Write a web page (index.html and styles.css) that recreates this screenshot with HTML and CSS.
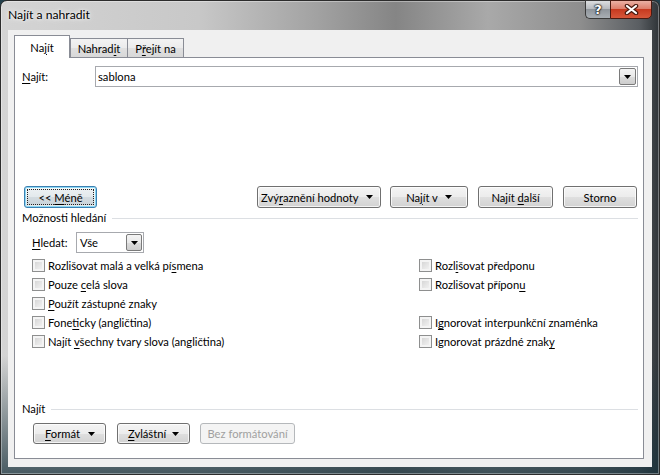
FILE: index.html
```html
<!DOCTYPE html>
<html lang="cs">
<head>
<meta charset="utf-8">
<title>Najít a nahradit</title>
<link rel="stylesheet" href="styles.css">
</head>
<body>
<div class="window">
  <div class="titlebar">
    <span class="title">Najít a nahradit</span>
    <div class="caption-btns">
      <div class="cap help">?</div>
      <div class="cap close">
        <svg width="15" height="11" viewBox="0 0 15 11"><path d="M3 2 L12 9 M12 2 L3 9" stroke="#4a1a10" stroke-width="4.5" stroke-linecap="round"/><path d="M3 2 L12 9 M12 2 L3 9" stroke="#fff" stroke-width="2.2" stroke-linecap="round"/></svg>
      </div>
    </div>
  </div>
  <div class="client">
    <div class="tabs">
      <div class="tab active"><span>Na<u>j</u>ít</span></div>
      <div class="tab t2"><span>Nahrad<u>i</u>t</span></div>
      <div class="tab t3"><span>P<u>ř</u>ejít na</span></div>
    </div>
    <div class="panel">
      <div class="find-row">
        <span class="find-label"><u>N</u>ajít:</span>
        <div class="combo">
          <span class="combo-text">sablona</span>
          <span class="dd-btn"><svg width="7" height="4" viewBox="0 0 7 4"><path d="M0 0h7L3.5 4z"/></svg></span>
        </div>
      </div>

      <div class="btn-row">
        <div class="btn focused less"><span class="focus-rect"><span>&lt;&lt; <u>M</u>éně</span></span></div>
        <div class="btn-group">
          <div class="btn menu zvyr"><span>Zvý<u>r</u>aznění hodnoty</span><svg width="7" height="4" viewBox="0 0 7 4"><path d="M0 0h7L3.5 4z"/></svg></div>
          <div class="btn menu najitv"><span>Na<u>j</u>ít v</span><svg width="7" height="4" viewBox="0 0 7 4"><path d="M0 0h7L3.5 4z"/></svg></div>
          <div class="btn dalsi"><span>Najít <u>d</u>alší</span></div>
          <div class="btn storno"><span>Storno</span></div>
        </div>
      </div>

      <div class="group-head"><span>Možnosti hledání</span><div class="rule"></div></div>

      <div class="search-row">
        <span class="search-label"><u>H</u>ledat:</span>
        <div class="select">
          <span class="select-text">Vše</span>
          <span class="dd-btn"><svg width="7" height="4" viewBox="0 0 7 4"><path d="M0 0h7L3.5 4z"/></svg></span>
        </div>
      </div>

      <div class="options">
        <div class="check"><span class="cb"></span><span>Rozlišovat malá a velká pí<u>s</u>mena</span></div>
        <div class="check"><span class="cb"></span><span>Rozl<u>i</u>šovat předponu</span></div>
        <div class="check"><span class="cb"></span><span>Pouze <u>c</u>elá slova</span></div>
        <div class="check"><span class="cb"></span><span>Rozlišovat přípon<u>u</u></span></div>
        <div class="check"><span class="cb"></span><span><u>P</u>oužít zástupné znaky</span></div>
        <div class="check empty"></div>
        <div class="check"><span class="cb"></span><span>Fone<u>t</u>icky (angličtina)</span></div>
        <div class="check"><span class="cb"></span><span>I<u>g</u>norovat interpunkční znaménka</span></div>
        <div class="check"><span class="cb"></span><span>Najít <u>v</u>šechny tvary slova (angličtina)</span></div>
        <div class="check"><span class="cb"></span><span>Ignorovat prázdné znak<u>y</u></span></div>
      </div>

      <div class="group-head lower"><span>Najít</span><div class="rule"></div></div>

      <div class="btn-row bottom">
        <div class="btn menu fmt"><span><u>F</u>ormát</span><svg width="7" height="4" viewBox="0 0 7 4"><path d="M0 0h7L3.5 4z"/></svg></div>
        <div class="btn menu zvl"><span><u>Z</u>vláštní</span><svg width="7" height="4" viewBox="0 0 7 4"><path d="M0 0h7L3.5 4z"/></svg></div>
        <div class="btn disabled bez"><span>Bez formátování</span></div>
      </div>
    </div>
  </div>
</div>
</body>
</html>
```

FILE: styles.css
```css
* { box-sizing: border-box; }
html, body { margin: 0; padding: 0; }
body {
  width: 660px;
  height: 475px;
  overflow: hidden;
  font-family: "Lato", "Noto Sans", sans-serif;
  font-size: 11.2px;
  color: #000;
  background: #23404c;
}
u { text-decoration: underline; text-underline-offset: 2px; }

.window {
  width: 660px;
  height: 475px;
  border: 1px solid #2c2c2c;
  border-radius: 7px 7px 0 0;
  padding: 0 7px 7px;
  display: flex;
  flex-direction: column;
  background:
    linear-gradient(to bottom, rgba(0,0,0,0) 0%, rgba(0,0,0,0) 75%, rgba(25,50,60,0.75) 100%),
    linear-gradient(to right, #d4d4d4 0%, #c8c8c8 30%, #a2a2a2 48%, #858585 60%, #a9a9a9 74%, #8e8e8e 88%, #5a5e62 97%, #2f3438 100%);
  box-shadow: inset 0 0 0 1px rgba(255,255,255,0.35);
}

.titlebar {
  height: 29px;
  display: flex;
  align-items: flex-start;
}
.title {
  margin-top: 6px;
  font-size: 12.2px;
  text-shadow: 0 0 6px rgba(255,255,255,0.9), 0 0 3px rgba(255,255,255,0.9);
}
.caption-btns {
  margin-left: auto;
  margin-top: -1px;
  display: flex;
  height: 19px;
}
.cap {
  height: 19px;
  display: flex;
  align-items: center;
  justify-content: center;
}
.help {
  width: 25px;
  border: 1px solid #3a3a3a;
  border-right: none;
  border-radius: 0 0 0 5px;
  background: linear-gradient(to bottom, #dcdee0 0%, #b7bbbf 45%, #8f959b 50%, #a9afb4 100%);
  color: #fff;
  font-family: "DejaVu Sans", sans-serif;
  font-weight: bold;
  font-size: 13px;
  text-shadow: 0 0 1px #000, 0 0 2px #000, 0 0 2px #000;
}
.close {
  width: 42px;
  border: 1px solid #4a1b12;
  border-radius: 0 0 5px 0;
  background: linear-gradient(to bottom, #eab0a4 0%, #dd7f6c 45%, #c73a20 50%, #d6573a 100%);
}

.client {
  flex: 1;
  background: #f0f0f0;
  padding: 5px 8px 8px 6px;
  display: flex;
  flex-direction: column;
}

.tabs {
  display: flex;
  align-items: flex-end;
  height: 23px;
  margin-bottom: -1px;
  position: relative;
  z-index: 1;
}
.tab {
  height: 20px;
  border: 1px solid #898c95;
  background: linear-gradient(to bottom, #f3f3f3 0%, #ebebeb 50%, #e0e0e0 51%, #d8d8d8 100%);
  display: flex;
  align-items: center;
  justify-content: center;
  padding-top: 1px;
}
.tab.active {
  width: 56px;
  height: 23px;
  background: #fff;
  border-bottom: none;
  padding-top: 0;
}
.tab.t2 { width: 58px; border-left: 1px solid #898c95; }
.tab.t3 { width: 56px; border-left: none; }

.panel {
  flex: 1;
  background: #fff;
  border: 1px solid #898c95;
  display: flex;
  flex-direction: column;
}

.find-row {
  margin-top: 8px;
  height: 21px;
  display: flex;
  align-items: center;
  padding: 0 5px 0 7px;
}
.find-label { width: 73px; }
.combo {
  flex: 1;
  height: 21px;
  border: 1px solid #a7a9ae;
  display: flex;
  align-items: center;
  padding-left: 2px;
}
.combo-text { flex: 1; }
.dd-btn {
  width: 17px;
  height: 17px;
  margin-right: 1px;
  border: 1px solid #7a7a7a;
  border-radius: 2px;
  background: linear-gradient(to bottom, #f4f4f4 0%, #e9e9e9 50%, #dcdcdc 51%, #cdcdcd 100%);
  display: flex;
  align-items: center;
  justify-content: center;
}

.btn-row {
  margin-top: 99px;
  display: flex;
  padding: 0 6px 0 9px;
}
.btn-group {
  margin-left: auto;
  display: flex;
  gap: 10px;
}
.btn {
  height: 22px;
  border: 1px solid #707070;
  border-radius: 3px;
  background: linear-gradient(to bottom, #f4f4f4 0%, #ececec 50%, #dfdfdf 51%, #d2d2d2 100%);
  box-shadow: inset 0 0 0 1px rgba(255,255,255,0.75);
  display: flex;
  align-items: center;
  justify-content: center;
  white-space: nowrap;
}
.btn.less {
  width: 73px;
  border-color: #3c7fb1;
  box-shadow: inset 0 0 0 1px #8ad8f5, inset 0 0 0 2px rgba(255,255,255,0.5);
  background: linear-gradient(to bottom, #eef2f4 0%, #e3e9ec 50%, #d3dbe0 51%, #c9d2d8 100%);
  padding: 2px;
}
.focus-rect {
  width: 100%;
  height: 100%;
  border: 1px dotted #222;
  display: flex;
  align-items: center;
  justify-content: center;
}
.btn.menu { justify-content: space-between; padding: 0 7px 0 3px; }
.btn.menu svg { flex: none; }
.btn.zvyr { width: 124px; margin-right: -1px; }
.btn.najitv { width: 78px; justify-content: center; gap: 7px; padding: 0; }
.btn.dalsi { width: 75px; }
.btn.storno { width: 74px; }

.group-head {
  margin-top: 2px;
  height: 15px;
  display: flex;
  align-items: center;
  padding: 0 5px 0 7px;
}
.group-head .rule {
  flex: 1;
  height: 1px;
  background: #dcdfe3;
  margin-left: 6px;
  margin-top: 2px;
}

.search-row {
  margin-top: 7px;
  height: 21px;
  display: flex;
  align-items: center;
  padding-left: 17px;
}
.search-label { width: 44px; }
.select {
  width: 68px;
  height: 21px;
  border: 1px solid #a7a9ae;
  display: flex;
  align-items: center;
  padding-left: 3px;
}
.select-text { flex: 1; }
.select .dd-btn { width: 16px; }

.options {
  margin-top: 3px;
  padding-left: 17px;
  display: grid;
  grid-template-columns: 387px 1fr;
  grid-auto-rows: 19px;
}
.check {
  display: flex;
  align-items: center;
  gap: 3px;
  white-space: nowrap;
}
.cb {
  flex: none;
  width: 13px;
  height: 13px;
  border: 1px solid #8e8f8f;
  background: linear-gradient(135deg, #cfcfcf 0%, #e4e4e4 50%, #f7f7f7 100%);
  box-shadow: inset 0 0 0 2px #f4f4f4;
}

.group-head.lower { margin-top: 50px; }

.btn-row.bottom {
  margin-top: 7px;
  padding: 0 0 0 18px;
  gap: 11px;
}
.btn-row.bottom .btn { height: 21px; }
.btn.fmt { width: 73px; padding: 0 10px 0 11px; }
.btn.zvl { width: 73px; padding: 0 10px 0 10px; }
.btn.bez {
  width: 95px;
  margin-left: -1px;
  color: #a0a0a0;
  border-color: #b5b8bb;
  background: #f4f4f4;
  box-shadow: none;
}
```
